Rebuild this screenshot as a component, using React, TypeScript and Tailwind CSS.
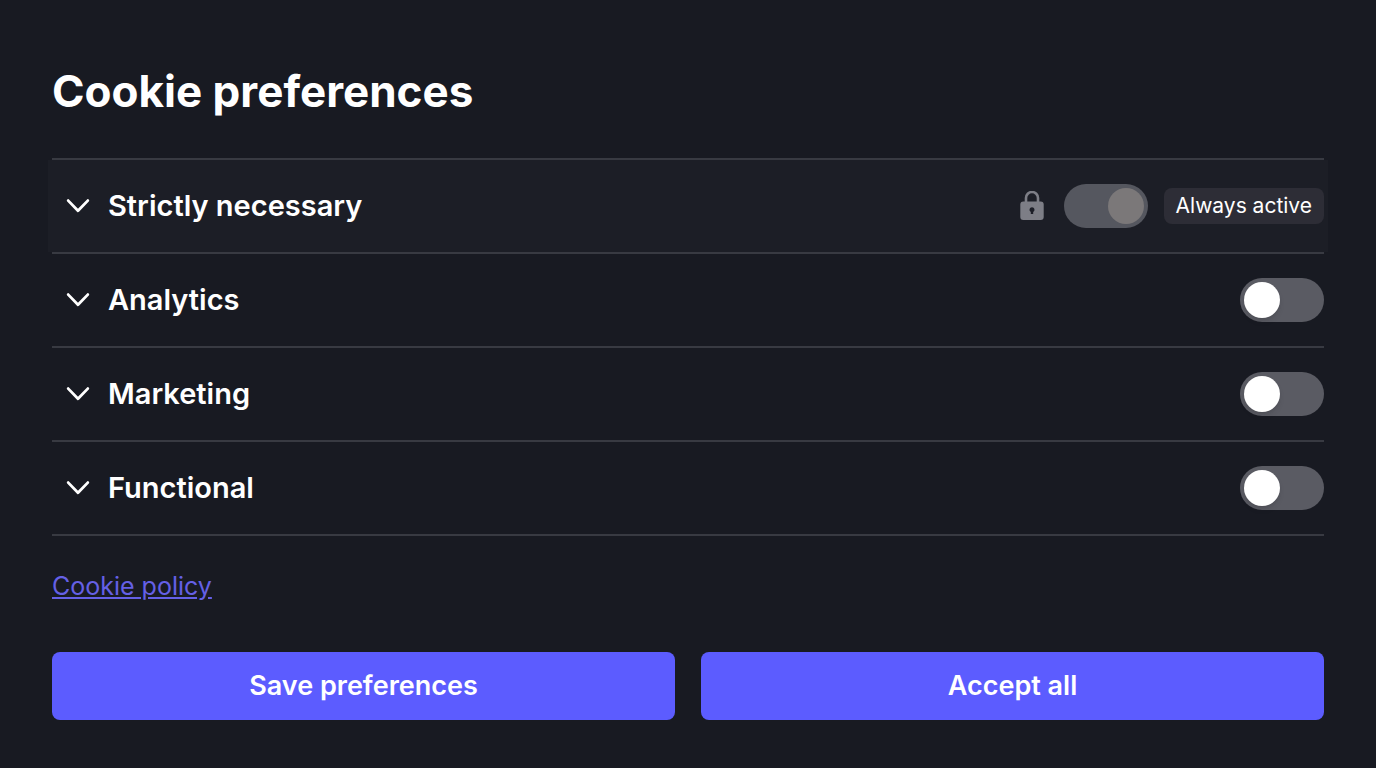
/**
 * CookiePreferences
 *
 * Consent dialog: one row per cookie category, with a switch each.
 */

import { useState } from 'react';

type CategoryId = 'necessary' | 'analytics' | 'marketing' | 'functional';

interface Category {
  id: CategoryId;
  label: string;
  locked?: boolean;
}

const CATEGORIES: readonly Category[] = [
  { id: 'necessary', label: 'Strictly necessary', locked: true },
  { id: 'analytics', label: 'Analytics' },
  { id: 'marketing', label: 'Marketing' },
  { id: 'functional', label: 'Functional' },
];

const DEFAULT_CONSENT: Record<CategoryId, boolean> = {
  necessary: true,
  analytics: false,
  marketing: false,
  functional: false,
};

function ChevronIcon({ open }: { open: boolean }) {
  return (
    <svg
      viewBox="0 0 24 24"
      className={`size-6 shrink-0 ${open ? 'rotate-180' : ''}`}
      fill="none"
      stroke="currentColor"
      strokeWidth="2.8"
      strokeLinecap="round"
      strokeLinejoin="round"
      aria-hidden="true"
    >
      <path d="M2.2 6.6 12 16.8 21.8 6.6" />
    </svg>
  );
}

function LockIcon() {
  return (
    <svg viewBox="0 0 24 30" className="h-[30px] w-6 shrink-0 text-[#7d7e86]" aria-hidden="true">
      <path d="M6 12V7a6 6 0 0 1 12 0V12" fill="none" stroke="currentColor" strokeWidth="2.6" />
      <rect x="0.3" y="10.5" width="23.4" height="18.5" rx="3" fill="currentColor" />
      <path d="M12 16.2a2.5 2.5 0 0 1 1.2 4.7v2.1h-2.4v-2.1a2.5 2.5 0 0 1 1.2-4.7Z" fill="#1c1e27" />
    </svg>
  );
}

function Switch({
  checked,
  disabled = false,
  labelledBy,
  onChange,
}: {
  checked: boolean;
  disabled?: boolean;
  labelledBy: string;
  onChange: (checked: boolean) => void;
}) {
  return (
    <input
      type="checkbox"
      role="switch"
      checked={checked}
      disabled={disabled}
      aria-labelledby={labelledBy}
      onChange={(e) => onChange(e.target.checked)}
      className="flex h-11 w-21 shrink-0 cursor-pointer appearance-none items-center rounded-full bg-[#5a5b63] px-1 before:size-9 before:rounded-full before:bg-white before:shadow-md checked:justify-end checked:bg-[#5c5cff] disabled:cursor-not-allowed disabled:bg-[#55575f] disabled:before:bg-[#7b7879] disabled:before:shadow-none"
    />
  );
}

function CategoryRow({
  category,
  checked,
  onChange,
}: {
  category: Category;
  checked: boolean;
  onChange: (checked: boolean) => void;
}) {
  const [open, setOpen] = useState(false);
  const labelId = `${category.id}-label`;

  return (
    <li className="border-b-2 border-[#383a42]">
      <div
        className={`-mx-1 flex items-center justify-between px-1 py-6 ${category.locked ? 'bg-[#1c1e26]' : ''}`}
      >
        <button
          type="button"
          aria-expanded={open}
          onClick={() => setOpen(!open)}
          className="flex items-center gap-[18px] pl-3.5 text-left"
        >
          <ChevronIcon open={open} />
          <span id={labelId} className="text-[29px] leading-10 font-semibold">
            {category.label}
          </span>
        </button>
        <div className="flex items-center">
          {category.locked && <LockIcon />}
          <div className="ml-5 flex">
            <Switch
              checked={checked}
              disabled={category.locked}
              labelledBy={labelId}
              onChange={onChange}
            />
          </div>
          {category.locked && (
            <span className="ml-4 rounded-lg bg-[#2d2d36] px-3 py-0.5 text-[21px] leading-8">
              Always active
            </span>
          )}
        </div>
      </div>
    </li>
  );
}

export default function App() {
  const [consent, setConsent] = useState(DEFAULT_CONSENT);

  function handleChange(id: CategoryId, checked: boolean) {
    setConsent((prev) => ({ ...prev, [id]: checked }));
  }

  function acceptAll() {
    setConsent({ necessary: true, analytics: true, marketing: true, functional: true });
  }

  return (
    <main className="min-h-screen bg-[#181a22] px-[52px] pt-16 pb-12 font-['Inter','Liberation_Sans',sans-serif] text-white">
      <h1 className="text-[44px] leading-[54px] font-bold">Cookie preferences</h1>

      <form onSubmit={(e) => e.preventDefault()}>
        <ul className="mt-10 border-t-2 border-[#383a42]">
          {CATEGORIES.map((category) => (
            <CategoryRow
              key={category.id}
              category={category}
              checked={consent[category.id]}
              onChange={(checked) => handleChange(category.id, checked)}
            />
          ))}
        </ul>

        <a
          href="#cookie-policy"
          className="mt-8 inline-block text-[25px] leading-9 text-[#6560e6] underline"
        >
          Cookie policy
        </a>

        <div className="mt-12 grid grid-cols-2 gap-[26px]">
          <button
            type="submit"
            className="rounded-lg bg-[#5c5cff] py-4 text-[27px] leading-9 font-semibold"
          >
            Save preferences
          </button>
          <button
            type="button"
            onClick={acceptAll}
            className="rounded-lg bg-[#5c5cff] py-4 text-[27px] leading-9 font-semibold"
          >
            Accept all
          </button>
        </div>
      </form>
    </main>
  );
}
